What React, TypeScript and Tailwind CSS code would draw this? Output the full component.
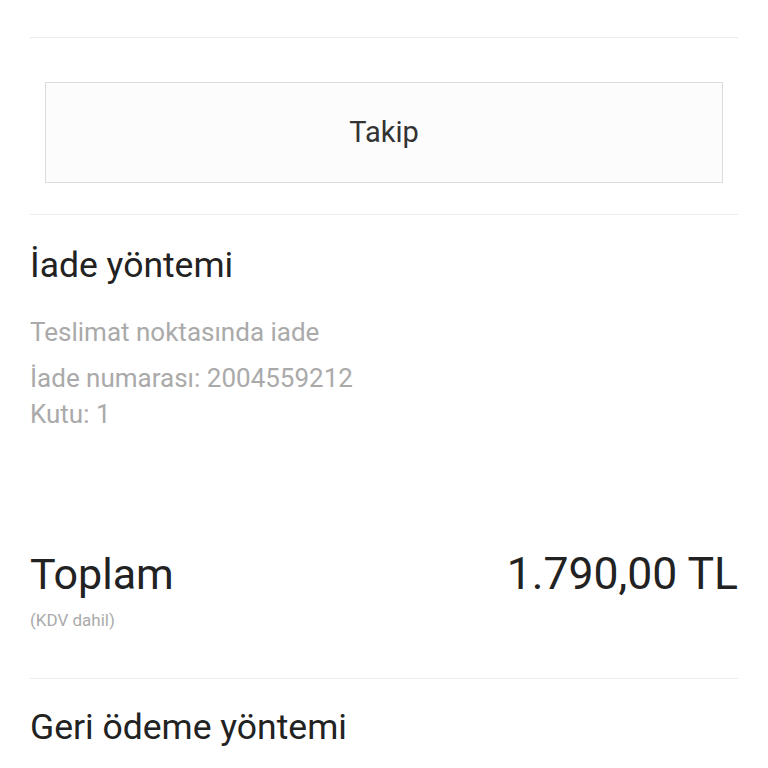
export default function App() {
  return (
    <div className="w-[768px] h-[768px] overflow-hidden bg-white px-[30px] font-['Roboto',sans-serif] text-[#222]">
      <div className="h-[38px] border-b border-[#ececec]" />
      <div className="px-[15px] pt-[44px] pb-[31px]">
        <button className="flex h-[101px] w-full items-center justify-center border border-[#dcdcdc] bg-[#fcfcfc] text-[29px] text-[#333]">
          Takip
        </button>
      </div>
      <div className="border-t border-[#ececec] pt-[28px]">
        <h2 className="text-[35.5px] leading-[44px]">İade yöntemi</h2>
        <div className="mt-[27px] text-[26px] text-[#aaa]">
          <p className="leading-[36px]">Teslimat noktasında iade</p>
          <p className="mt-[10px] leading-[36px]">İade numarası: 2004559212</p>
          <p className="leading-[36px]">Kutu: 1</p>
        </div>
      </div>
      <div className="mt-[117px] flex items-start justify-between">
        <div>
          <div className="text-[43px] leading-[50px]">Toplam</div>
          <div className="mt-[9px] text-[17px] text-[#aaa]">(KDV dahil)</div>
        </div>
        <div className="text-[44.5px] leading-[50px]">1.790,00 TL</div>
      </div>
      <div className="mt-[44px] border-t border-[#ececec] pt-[26px]">
        <h2 className="text-[35.5px] leading-[44px]">Geri ödeme yöntemi</h2>
      </div>
    </div>
  );
}
